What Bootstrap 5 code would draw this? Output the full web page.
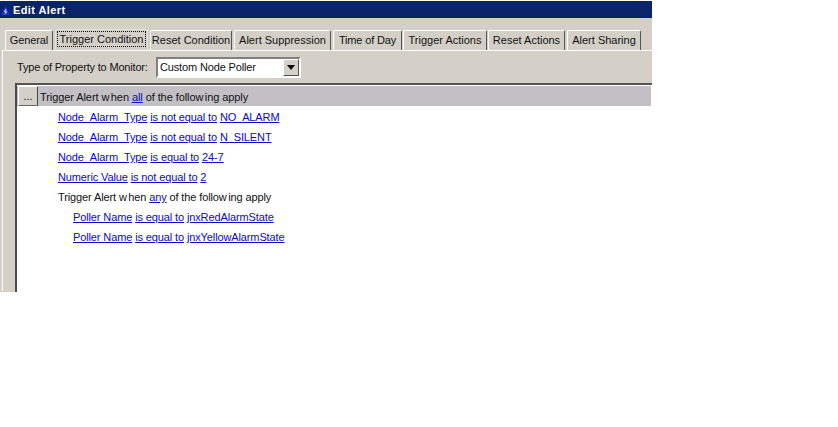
<!DOCTYPE html>
<html lang="en">
<head>
<meta charset="utf-8">
<title>Edit Alert</title>
<link rel="stylesheet" href="https://cdn.jsdelivr.net/npm/bootstrap@5.3.0/dist/css/bootstrap.min.css">
<style>
html,body{background:#fff;margin:0;height:100%}
body{font:11px/13px "Liberation Sans",Arial,sans-serif;color:#111}
.dlg{width:652px;height:292px;background:#d4d0c8}
.dlg-title{border-top:1px solid #fff;height:18px;background:#0a246a;color:#fff;font-weight:700;font-size:11px;padding:1px 0 0 1px;gap:3px;letter-spacing:.4px}
.dlg-tabs{margin:11px 0 0 5px;height:21px;border:0;flex-wrap:nowrap}
.dlg-tabs .nav-link{height:20px;margin-top:1px;padding:0;border:0;border-radius:2px 2px 0 0;border-top:1px solid #fff;border-left:1px solid #fff;border-right:1px solid #555;color:#111;background:#d4d0c8;font-size:11px;line-height:19px;text-align:center;white-space:nowrap}
.dlg-tabs .nav-link.active{height:21px;margin-top:0;background:#d4d0c8;color:#111;position:relative;line-height:19px;z-index:1}
.dlg-tabs .nav-link.active span{outline:1px dotted #111;padding:1px 2px}
.t1{width:48px;letter-spacing:-.1px}.t2{width:93px;margin:0 2px}.t3{width:82px;margin-right:2px}.t4{width:97px;margin-right:2px}.t5{width:69px;margin-right:1px;letter-spacing:-.15px}.t6{width:84px;margin-right:1px}.t7{width:77px;margin-right:2px}.t8{width:74px}
.dlg-page{margin-left:2px;border-top:1px solid #fff;border-left:1px solid #fff;height:241px}
.prop-row{height:32px;padding:6px 0 0 14px}
.prop-label{width:139px;letter-spacing:-.18px}
.prop-select{width:145px;height:21px;background:#fff;border:2px solid;border-color:#808080 #fff #fff #808080;padding-left:2px;line-height:17px;letter-spacing:-.15px}
.prop-arrow{width:16px;height:17px;background:#d4d0c8;border:1px solid;border-color:#fff #555 #555 #fff}
.prop-arrow i{width:0;height:0;border:4px solid transparent;border-top:5px solid #000;border-bottom:0}
.rule-box{margin-left:12px;border-left:2px solid #4a4a4a;border-top:2px solid #555;background:#fff;height:209px}
.rule-head{height:20px;background:#c2c0c4;margin:1px 1px 0 0;gap:2px}
.rule-head>span{padding-top:2px;letter-spacing:-.08px}
.dots{width:20px;height:20px;margin-left:1px;padding:0;background:#d4d0c8;border:1px solid;border-color:#fff #444 #666 #fff;border-radius:0;font-size:11px;line-height:17px;color:#111}
.rule-list{padding:0 0 0 41px;margin:1px 0 0;letter-spacing:-.12px}
.rule-list li{height:20px;line-height:20px;white-space:nowrap}
.rule-list .sub{padding-left:15px}
.rule-box a{color:#0a0ac8}
.gap{margin-right:1.5px}
</style>
</head>
<body>
<div class="dlg">
  <div class="dlg-title d-flex align-items-center">
    <svg width="9" height="11" viewBox="0 0 9 11"><path d="M4.5 1 9 10H0Z" fill="#2233cc"/><path d="M5.500 3.500 2.500 6.500h2l-1 3 3-3h-2Z" fill="#fff"/></svg>
    <span>Edit Alert</span>
  </div>
  <ul class="nav nav-tabs dlg-tabs">
    <li class="nav-item"><a class="nav-link t1" href="#">General</a></li>
    <li class="nav-item"><a class="nav-link active t2" href="#"><span>Trigger Condition</span></a></li>
    <li class="nav-item"><a class="nav-link t3" href="#">Reset Condition</a></li>
    <li class="nav-item"><a class="nav-link t4" href="#">Alert Suppression</a></li>
    <li class="nav-item"><a class="nav-link t5" href="#">Time of Day</a></li>
    <li class="nav-item"><a class="nav-link t6" href="#">Trigger Actions</a></li>
    <li class="nav-item"><a class="nav-link t7" href="#">Reset Actions</a></li>
    <li class="nav-item"><a class="nav-link t8" href="#">Alert Sharing</a></li>
  </ul>
  <div class="dlg-page">
    <div class="prop-row d-flex">
      <div class="prop-label pt-1">Type of Property to Monitor:</div>
      <div class="prop-select d-flex justify-content-between">
        <span>Custom Node Poller</span>
        <span class="prop-arrow d-flex align-items-center justify-content-center"><i></i></span>
      </div>
    </div>
    <div class="rule-box">
      <div class="rule-head d-flex align-items-center">
        <button class="btn dots" type="button">...</button>
        <span>Trigger Alert <span class="gap">w</span>hen <a href="#">all</a> of the follo<span class="gap">w</span>ing apply</span>
      </div>
      <ul class="list-unstyled rule-list">
        <li><a href="#">Node_Alarm_Type</a> <a href="#">is not equal to</a> <a href="#">NO_ALARM</a></li>
        <li><a href="#">Node_Alarm_Type</a> <a href="#">is not equal to</a> <a href="#">N_SILENT</a></li>
        <li><a href="#">Node_Alarm_Type</a> <a href="#">is equal to</a> <a href="#">24-7</a></li>
        <li><a href="#">Numeric Value</a> <a href="#">is not equal to</a> <a href="#">2</a></li>
        <li>Trigger Alert <span class="gap">w</span>hen <a href="#">any</a> of the follo<span class="gap">w</span>ing apply</li>
        <li class="sub"><a href="#">Poller Name</a> <a href="#">is equal to</a> <a href="#">jnxRedAlarmState</a></li>
        <li class="sub"><a href="#">Poller Name</a> <a href="#">is equal to</a> <a href="#">jnxYellowAlarmState</a></li>
      </ul>
    </div>
  </div>
</div>
</body>
</html>
